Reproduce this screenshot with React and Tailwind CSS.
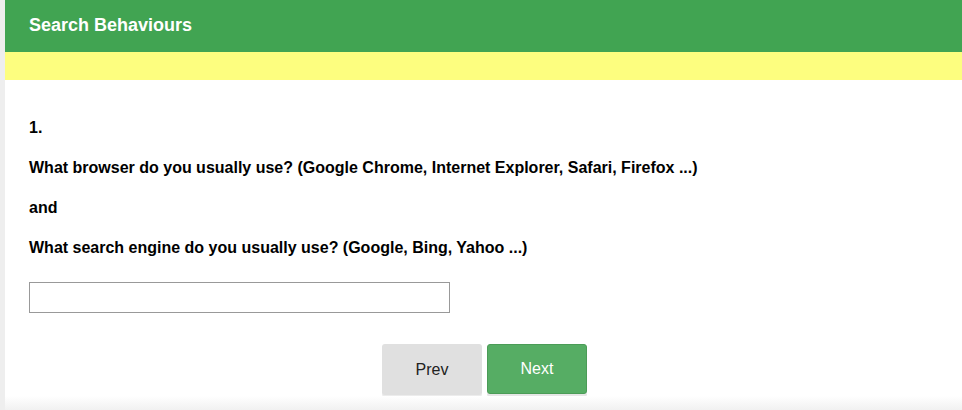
import * as React from 'react'

function App() {
  const [answer, setAnswer] = React.useState('')

  return (
    <div className="flex min-h-[410px] bg-[#eeeeee] font-['Liberation_Sans',Arial,sans-serif]">
      <div className="ml-[5px] flex flex-1 flex-col bg-white">
        <div className="flex h-[52px] items-center bg-[#41a452] pl-6">
          <h1 className="pb-[2px] text-[18px] font-bold text-white">
            Search Behaviours
          </h1>
        </div>
        <div className="h-[28px] bg-[#fdfe7f]" />
        <div className="px-6 pt-[38px]">
          <div className="space-y-5 text-[16px] font-bold leading-5 text-black">
            <p>1.</p>
            <p>
              What browser do you usually use? (Google Chrome, Internet
              Explorer, Safari, Firefox ...)
            </p>
            <p>and</p>
            <p>
              What search engine do you usually use? (Google, Bing, Yahoo ...)
            </p>
          </div>
          <input
            type="text"
            value={answer}
            onChange={(e) => setAnswer(e.target.value)}
            className="mt-[24px] block h-[31px] w-[421px] border border-[#999999] bg-white px-2 text-[16px] outline-none"
          />
          <div className="mt-[31px] flex justify-center gap-[5px] pl-[2px]">
            <button className="h-[51px] w-[100px] rounded-[3px] bg-[#e0e0e0] text-[16px] text-[#222222] shadow-[0_2px_0_#ececec]">
              Prev
            </button>
            <button className="h-[50px] w-[100px] rounded-[3px] border border-[#4b9c57] bg-[#56ad64] text-[16px] text-white shadow-[0_3px_0_#e6e6e6]">
              Next
            </button>
          </div>
        </div>
        <div className="mt-auto h-[14px] bg-gradient-to-b from-white to-[#f1f1f1]" />
      </div>
    </div>
  )
}

export default App
